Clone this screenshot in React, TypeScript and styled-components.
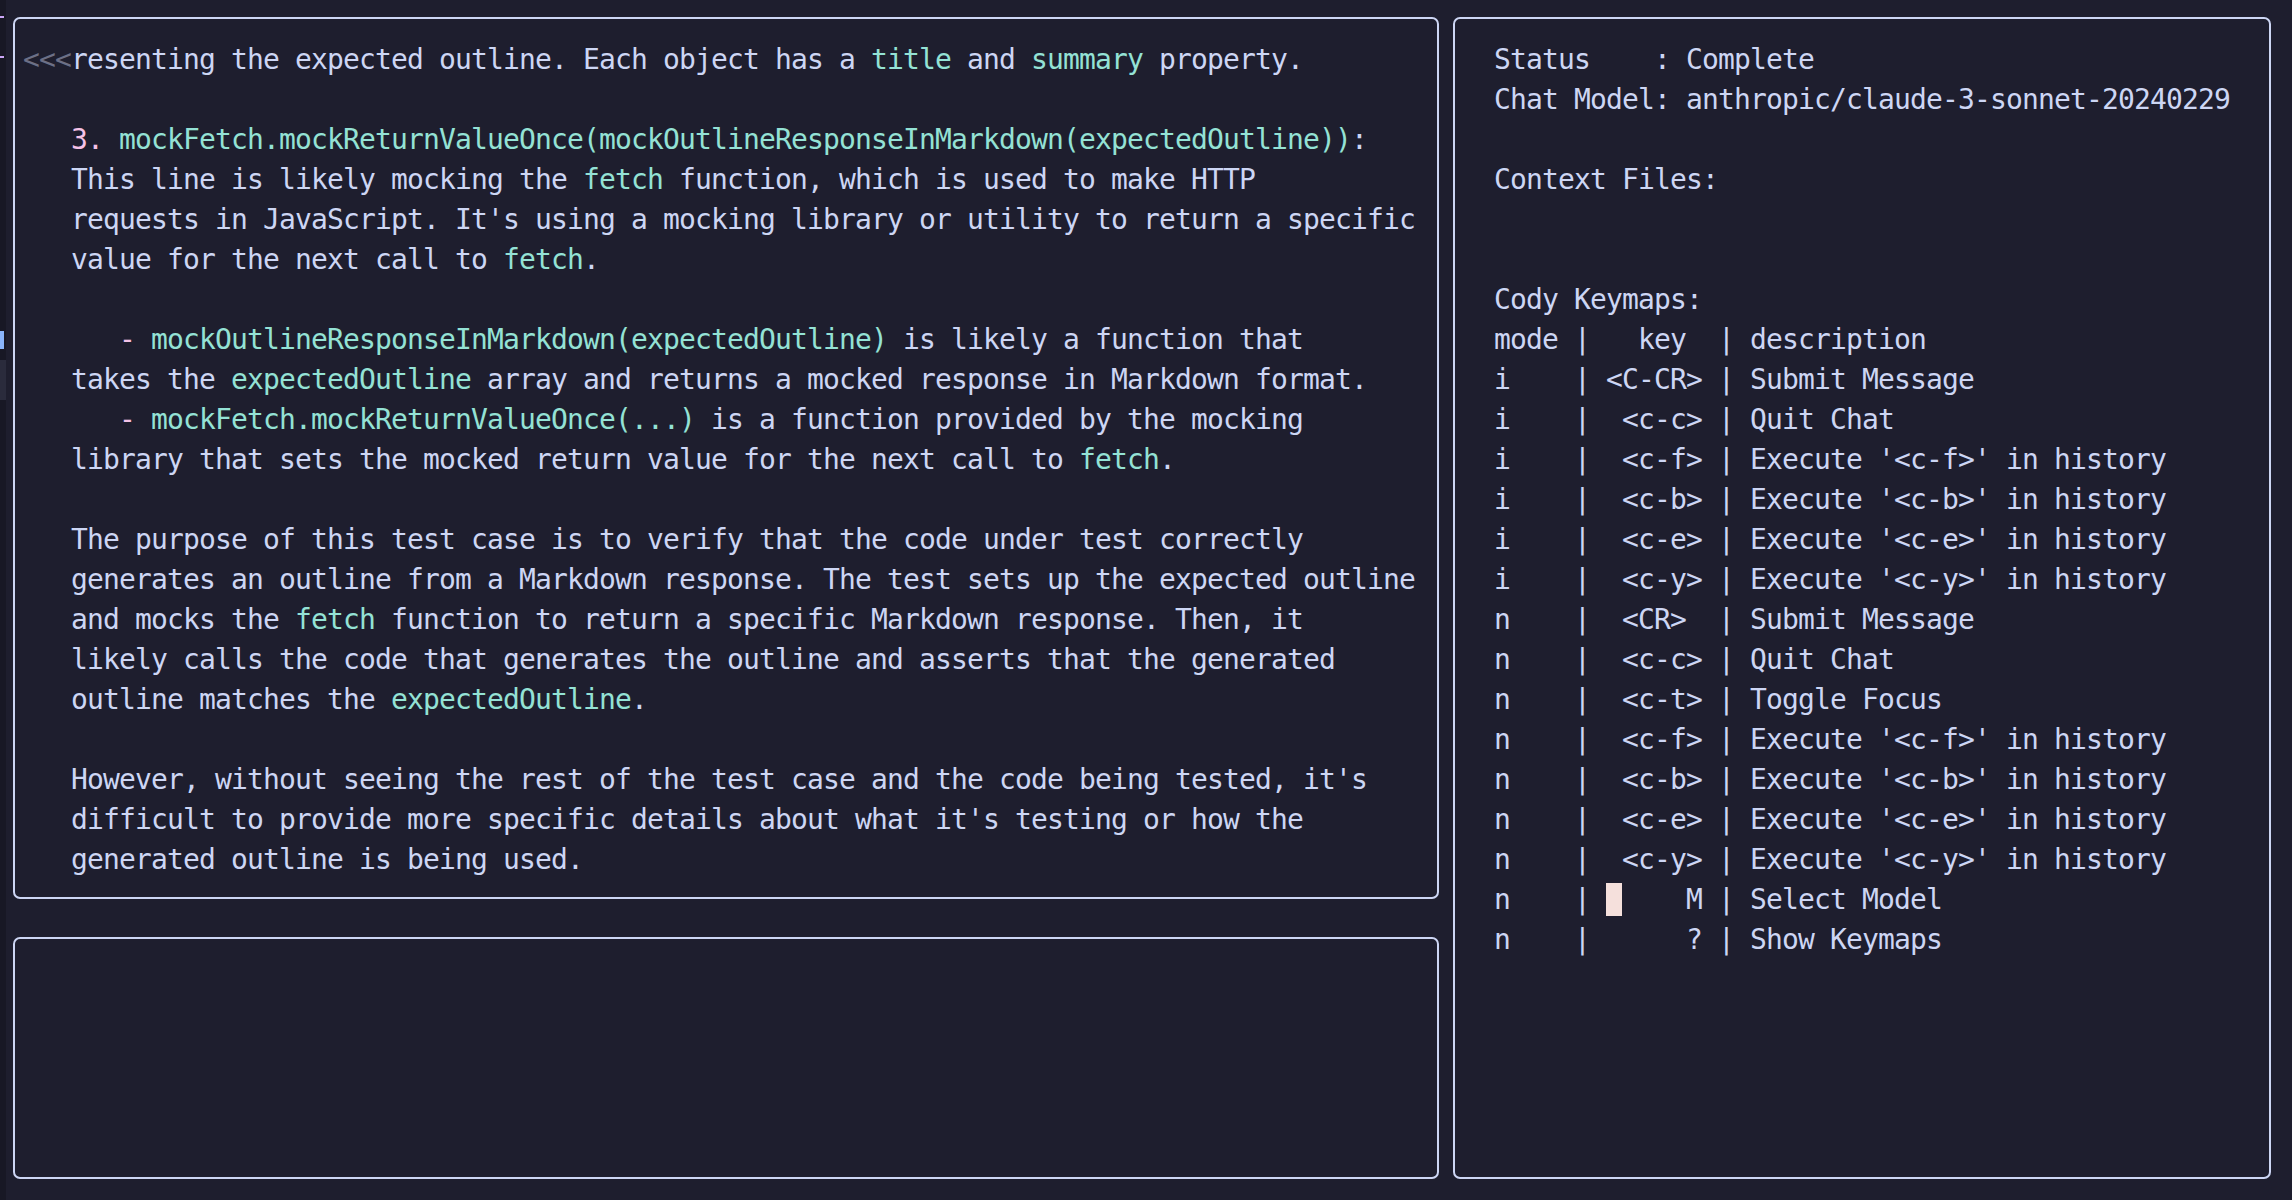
import React from "react";
import styled, { createGlobalStyle } from "styled-components";

const C = {
  bg: "#1e1e2e",
  mantle: "#181825",
  text: "#cdd6f4",
  teal: "#94e2d5",
  pink: "#f5c2e7",
  gray: "#6c7086",
  border: "#cdd6f4",
  cursor: "#f5e0dc",
  mauve: "#cba6f7",
  blue: "#89b4fa",
  surface: "#2a2b3c",
};

const GlobalStyle = createGlobalStyle`
  html, body {
    margin: 0;
    padding: 0;
    background: ${C.bg};
    overflow: hidden;
  }
  * { box-sizing: border-box; }
`;

const Screen = styled.div`
  display: flex;
  width: 2292px;
  height: 1200px;
  background: ${C.bg};
  font-family: "DejaVu Sans Mono", "Liberation Mono", monospace;
  font-size: 28px;
  letter-spacing: -0.857px;
  color: ${C.text};
`;

const Gutter = styled.div`
  width: 6px;
  flex: none;
  background: ${C.mantle};
  display: flex;
  flex-direction: column;
`;

const GutterRow = styled.div<{ $mark?: "mauve" | "blue" | "band" }>`
  height: 40px;
  display: flex;
  align-items: center;
  background: ${(p) => (p.$mark === "band" ? C.surface : "transparent")};
  &::before {
    content: "";
    display: ${(p) => (p.$mark === "mauve" || p.$mark === "blue" ? "block" : "none")};
    width: 4px;
    height: ${(p) => (p.$mark === "blue" ? "18px" : "2px")};
    background: ${(p) => (p.$mark === "blue" ? C.blue : C.mauve)};
    margin-top: ${(p) => (p.$mark === "mauve" ? "-6px" : "0")};
  }
`;

const Main = styled.div`
  flex: 1;
  display: grid;
  grid-template-columns: 1426px 1fr;
  column-gap: 14px;
  padding: 17px 21px 21px 7px;
`;

const LeftColumn = styled.div`
  display: flex;
  flex-direction: column;
  gap: 38px;
`;

const Panel = styled.div`
  border: 2px solid ${C.border};
  border-radius: 7px;
  background: ${C.bg};
`;

const ChatBox = styled(Panel)`
  height: 882px;
  padding: 21px 0 0 8px;
`;

const InputBox = styled(Panel)`
  flex: 1;
`;

const InfoBox = styled(Panel)`
  padding: 21px 0 0 39px;
`;

const Line = styled.div`
  height: 40px;
  line-height: 40px;
  white-space: pre;
`;

const Seg = styled.span<{ $k: "t" | "c" | "p" | "g" }>`
  color: ${(p) =>
    p.$k === "c" ? C.teal : p.$k === "p" ? C.pink : p.$k === "g" ? C.gray : C.text};
`;

const Cursor = styled.span`
  background: ${C.cursor};
  color: ${C.bg};
`;

type K = "t" | "c" | "p" | "g";
type S = [K, string];

const chat: S[][] = [
  [["g", "<<<"], ["t", "resenting the expected outline. Each object has a "], ["c", "title"], ["t", " and "], ["c", "summary"], ["t", " property."]],
  [],
  [["t", "   "], ["p", "3."], ["t", " "], ["c", "mockFetch.mockReturnValueOnce(mockOutlineResponseInMarkdown(expectedOutline))"], ["t", ":"]],
  [["t", "   This line is likely mocking the "], ["c", "fetch"], ["t", " function, which is used to make HTTP"]],
  [["t", "   requests in JavaScript. It's using a mocking library or utility to return a specific"]],
  [["t", "   value for the next call to "], ["c", "fetch"], ["t", "."]],
  [],
  [["t", "      "], ["p", "-"], ["t", " "], ["c", "mockOutlineResponseInMarkdown(expectedOutline)"], ["t", " is likely a function that"]],
  [["t", "   takes the "], ["c", "expectedOutline"], ["t", " array and returns a mocked response in Markdown format."]],
  [["t", "      "], ["p", "-"], ["t", " "], ["c", "mockFetch.mockReturnValueOnce(...)"], ["t", " is a function provided by the mocking"]],
  [["t", "   library that sets the mocked return value for the next call to "], ["c", "fetch"], ["t", "."]],
  [],
  [["t", "   The purpose of this test case is to verify that the code under test correctly"]],
  [["t", "   generates an outline from a Markdown response. The test sets up the expected outline"]],
  [["t", "   and mocks the "], ["c", "fetch"], ["t", " function to return a specific Markdown response. Then, it"]],
  [["t", "   likely calls the code that generates the outline and asserts that the generated"]],
  [["t", "   outline matches the "], ["c", "expectedOutline"], ["t", "."]],
  [],
  [["t", "   However, without seeing the rest of the test case and the code being tested, it's"]],
  [["t", "   difficult to provide more specific details about what it's testing or how the"]],
  [["t", "   generated outline is being used."]],
];

const keymaps: [string, string, string][] = [
  ["i", "<C-CR>", "Submit Message"],
  ["i", " <c-c>", "Quit Chat"],
  ["i", " <c-f>", "Execute '<c-f>' in history"],
  ["i", " <c-b>", "Execute '<c-b>' in history"],
  ["i", " <c-e>", "Execute '<c-e>' in history"],
  ["i", " <c-y>", "Execute '<c-y>' in history"],
  ["n", " <CR> ", "Submit Message"],
  ["n", " <c-c>", "Quit Chat"],
  ["n", " <c-t>", "Toggle Focus"],
  ["n", " <c-f>", "Execute '<c-f>' in history"],
  ["n", " <c-b>", "Execute '<c-b>' in history"],
  ["n", " <c-e>", "Execute '<c-e>' in history"],
  ["n", " <c-y>", "Execute '<c-y>' in history"],
  ["n", "     M", "Select Model"],
  ["n", "     ?", "Show Keymaps"],
];

const gutterMarks: Record<number, "mauve" | "blue" | "band"> = {
  0: "mauve",
  1: "mauve",
  8: "blue",
  9: "band",
};

export default function App() {
  return (
    <>
      <GlobalStyle />
      <Screen>
        <Gutter>
          {Array.from({ length: 30 }, (_, i) => (
            <GutterRow key={i} $mark={gutterMarks[i]} />
          ))}
        </Gutter>
        <Main>
          <LeftColumn>
            <ChatBox>
              {chat.map((segs, i) => (
                <Line key={i}>
                  {segs.map(([k, t], j) => (
                    <Seg key={j} $k={k}>
                      {t}
                    </Seg>
                  ))}
                </Line>
              ))}
            </ChatBox>
            <InputBox />
          </LeftColumn>
          <InfoBox>
            <Line>Status    : Complete</Line>
            <Line>Chat Model: anthropic/claude-3-sonnet-20240229</Line>
            <Line />
            <Line>Context Files:</Line>
            <Line />
            <Line />
            <Line>Cody Keymaps:</Line>
            <Line>mode |   key  | description</Line>
            {keymaps.map(([mode, key, desc], i) => {
              const isCursor = key === "     M";
              return (
                <Line key={i}>
                  {`${mode}    | `}
                  {isCursor ? (
                    <>
                      <Cursor> </Cursor>
                      {key.slice(1)}
                    </>
                  ) : (
                    key
                  )}
                  {` | ${desc}`}
                </Line>
              );
            })}
          </InfoBox>
        </Main>
      </Screen>
    </>
  );
}
